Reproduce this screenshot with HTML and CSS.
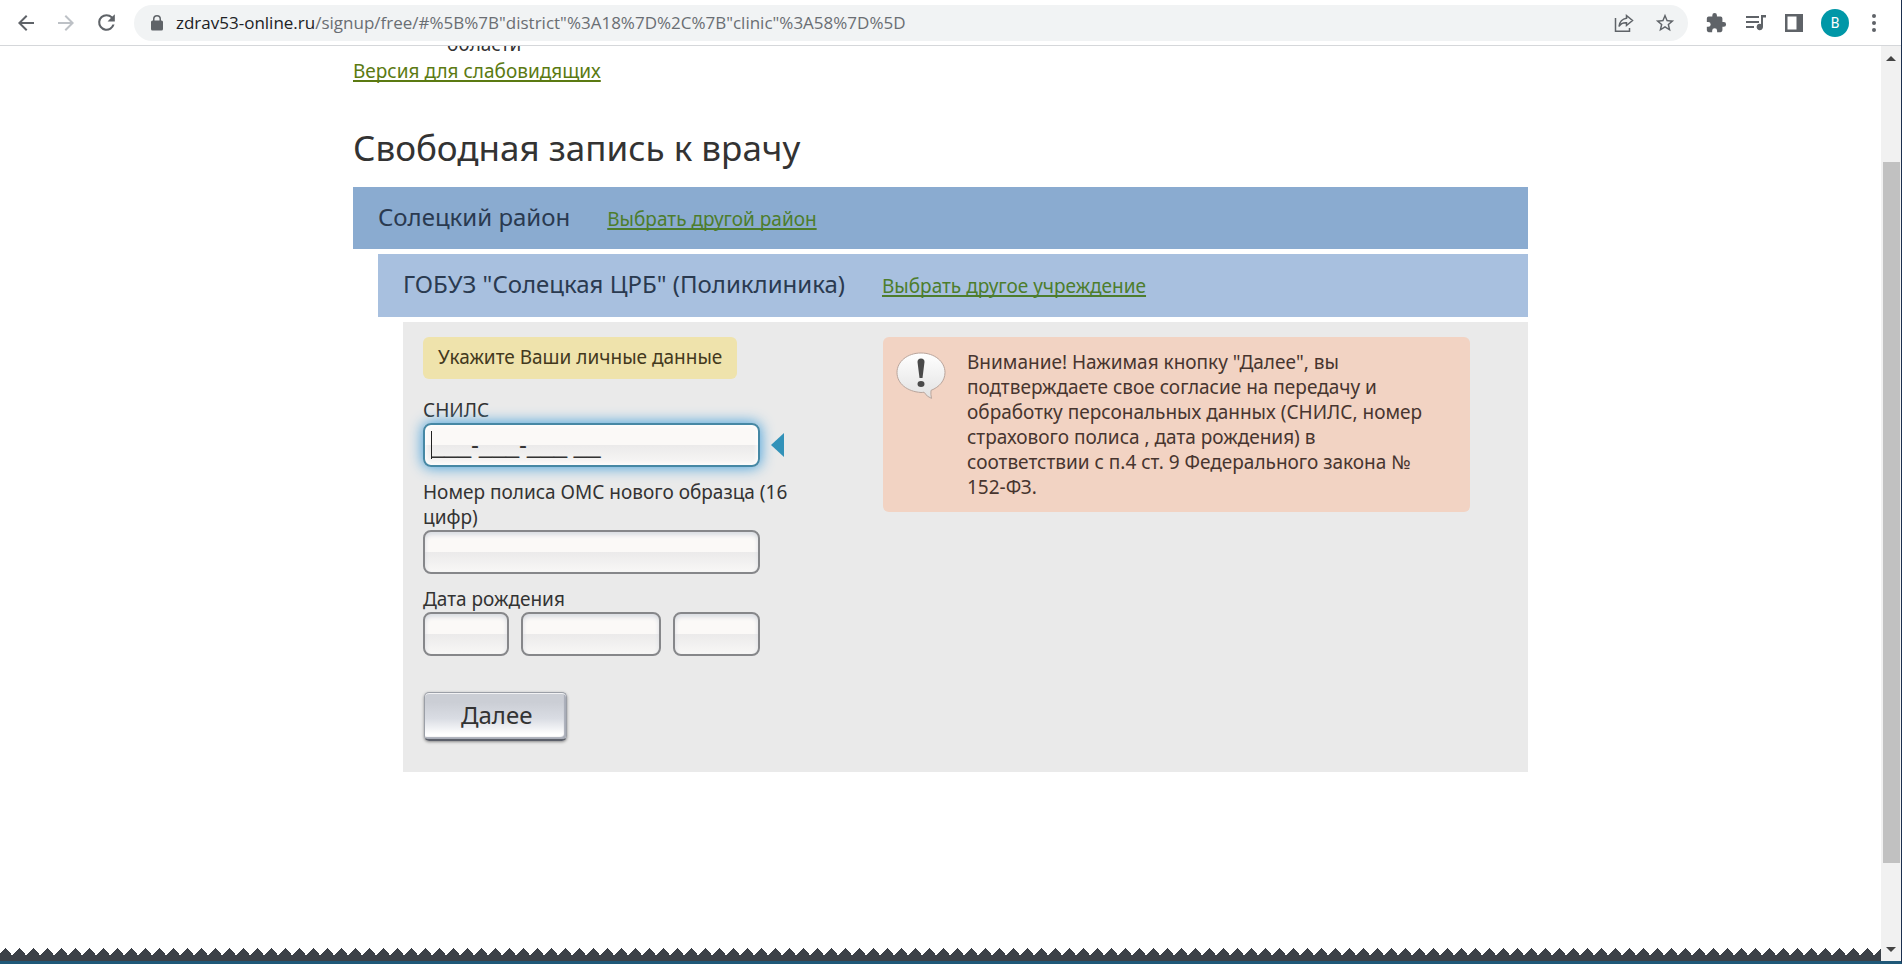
FILE: index.html
```html
<!DOCTYPE html>
<html lang="ru">
<head>
<meta charset="utf-8">
<title>Свободная запись к врачу</title>
<link rel="stylesheet" href="styles.css">
</head>
<body>
<header class="toolbar">
  <button class="tool back" aria-label="Назад"><svg width="24" height="24" viewBox="0 0 24 24"><path d="M20 11H7.83l5.59-5.59L12 4l-8 8 8 8 1.41-1.41L7.83 13H20v-2z"/></svg></button>
  <button class="tool forward" aria-label="Вперёд" disabled><svg width="24" height="24" viewBox="0 0 24 24"><path d="M4 13h12.17l-5.59 5.59L12 20l8-8-8-8-1.41 1.41L16.17 11H4v2z"/></svg></button>
  <button class="tool reload" aria-label="Обновить"><svg width="25" height="25" viewBox="0 0 24 24"><path d="M17.65 6.35A7.96 7.96 0 0 0 12 4a8 8 0 1 0 7.73 10h-2.08A6 6 0 1 1 12 6c1.66 0 3.14.69 4.22 1.78L13 11h7V4l-2.35 2.35z"/></svg></button>
  <div class="address">
    <svg class="lock" width="12" height="16" viewBox="0 0 12 16"><path d="M10.500 5.500H10V4a4 4 0 0 0-8 0v1.500h-.5A1.500 1.500 0 0 0 0 7v7a1.500 1.500 0 0 0 1.500 1.500h9A1.500 1.500 0 0 0 12 14V7a1.500 1.500 0 0 0-1.500-1.500zM3.500 4a2.500 2.500 0 0 1 5 0v1.500h-5z"/></svg>
    <span class="url"><span class="host">zdrav53-online.ru</span>/signup/free/#%5B%7B"district"%3A18%7D%2C%7B"clinic"%3A58%7D%5D</span>
    <button class="tool" aria-label="Поделиться"><svg width="20" height="20" viewBox="0 0 20 20" fill="none"><path class="line" d="M1.500 5v13.200h14V15M12.500 2.500l6 5-6 5V9.800C9 9.600 6.500 10.800 5 13.500 5.500 9 8.500 5.600 12.500 5.200z"/></svg></button>
    <button class="tool" aria-label="Добавить в закладки"><svg width="22" height="22" viewBox="0 0 24 24"><path d="M22 9.240l-7.190-.62L12 2 9.190 8.630 2 9.240l5.460 4.730L5.820 21 12 17.270 18.180 21l-1.630-7.030L22 9.240zM12 15.400l-3.760 2.270 1-4.280-3.320-2.880 4.380-.38L12 6.100l1.710 4.040 4.380.38-3.320 2.880 1 4.280L12 15.400z"/></svg></button>
  </div>
  <div class="actions">
    <button class="tool" aria-label="Расширения"><svg width="22" height="22" viewBox="0 0 24 24"><path d="M20.500 11H19V7a2 2 0 0 0-2-2h-4V3.500a2.500 2.500 0 0 0-5 0V5H4a2 2 0 0 0-2 2v3.800h1.500a2.700 2.700 0 0 1 0 5.400H2V20a2 2 0 0 0 2 2h3.800v-1.500a2.700 2.700 0 0 1 5.400 0V22H17a2 2 0 0 0 2-2v-4h1.500a2.500 2.500 0 0 0 0-5z"/></svg></button>
    <button class="tool" aria-label="Управление медиа"><svg width="22" height="20" viewBox="0 0 22 20"><path d="M1 3h13v2H1zM1 8h13v2H1zM1 13h8v2H1zM16 2h5v2.500h-3V14a3.200 3.200 0 1 1-2-3z"/></svg></button>
    <button class="tool" aria-label="Боковая панель"><svg width="18" height="18" viewBox="0 0 18 18"><path fill-rule="evenodd" d="M0 0h18v18H0zM2.500 2.500v13h9v-13z"/></svg></button>
    <button class="avatar" aria-label="Профиль">B</button>
    <button class="tool menu" aria-label="Меню"><svg width="6" height="18" viewBox="0 0 6 18"><circle cx="3" cy="2" r="2"/><circle cx="3" cy="9" r="2"/><circle cx="3" cy="16" r="2"/></svg></button>
  </div>
</header>

<div class="viewport">
  <div class="page">
    <main class="content">
      <p class="region">области</p>
      <a class="link" href="#">Версия для слабовидящих</a>
      <h1 class="title">Свободная запись к врачу</h1>
      <section class="step district">
        <h2 class="step-name">Солецкий район</h2>
        <a class="link" href="#">Выбрать другой район</a>
      </section>
      <section class="step clinic">
        <h2 class="step-name">ГОБУЗ "Солецкая ЦРБ" (Поликлиника)</h2>
        <a class="link" href="#">Выбрать другое учреждение</a>
      </section>
      <section class="panel">
        <form class="form">
          <p class="hint">Укажите Ваши личные данные</p>
          <div class="field">
            <label for="snils">СНИЛС</label>
            <div class="control active"><input class="box focused" id="snils" type="text" value="___-___-___ __"></div>
          </div>
          <div class="field">
            <label for="policy">Номер полиса ОМС нового образца (16 цифр)</label>
            <div class="control"><input class="box" id="policy" type="text"></div>
          </div>
          <div class="field">
            <label for="day">Дата рождения</label>
            <div class="control date">
              <input class="box" id="day" type="text">
              <input class="box" type="text" aria-label="Месяц">
              <input class="box" type="text" aria-label="Год">
            </div>
          </div>
          <button class="next" type="button">Далее</button>
        </form>
        <aside class="notice">
          <svg class="bubble" width="50" height="48" viewBox="0 0 50 48">
            <defs><linearGradient id="shine" x1="0" y1="0" x2="0" y2="1"><stop offset="0" stop-color="#fff"/><stop offset="1" stop-color="#e2e2e2"/></linearGradient></defs>
            <path d="M25 1C11.500 1 1 9.500 1 20.500S11 39.500 25 40.500q2 0 3-.3 3 4.800 7.500 6.200-1-4-.5-8C43.500 35 49 28.500 49 20.500 49 9.500 38.500 1 25 1z" fill="url(#shine)" stroke="#b9a59c"/>
            <path d="M21.500 10q0-3.500 3.500-3.500t3.500 3.500l-2 16h-3z" fill="#4a4a4a"/><ellipse cx="25" cy="32" rx="3.500" ry="3" fill="#4a4a4a"/>
          </svg>
          <p class="notice-text">Внимание! Нажимая кнопку "Далее", вы подтверждаете свое согласие на передачу и обработку персональных данных (СНИЛС, номер страхового полиса , дата рождения) в соответствии с п.4 ст. 9 Федерального закона № 152-ФЗ.</p>
        </aside>
      </section>
    </main>
    <div class="zigzag"></div>
  </div>
  <div class="scrollbar">
    <svg width="10" height="6" viewBox="0 0 10 6"><path d="M0 6l5-5 5 5z"/></svg>
    <div class="track"><div class="thumb"></div></div>
    <svg width="10" height="6" viewBox="0 0 10 6"><path d="M0 0l5 5 5-5z"/></svg>
  </div>
</div>
</body>
</html>
```
FILE: styles.css
```css
* { box-sizing: border-box; }

body {
  margin: 0;
  height: 100vh;
  display: flex;
  flex-direction: column;
  overflow: hidden;
  border-right: 1px solid #1b2f4e;
  border-bottom: 3px solid #1f5878;
  background: #fff;
  color: #333;
  font: 19px/25px "Noto Sans", "Open Sans", sans-serif;
}

h1, h2, p { margin: 0; font-weight: normal; }
button { border: 0; padding: 0; background: none; color: inherit; font: inherit; }
svg { display: block; }

/* Browser toolbar */
.toolbar {
  flex: none;
  height: 46px;
  display: flex;
  align-items: center;
  padding: 0 24px 0 14px;
  border-bottom: 1px solid #d5d7da;
}
.tool { flex: none; fill: #5f6368; }
.forward { margin-left: 16px; fill: #bdc1c6; }
.reload { margin-left: 16px; }
.line { stroke: #5f6368; stroke-width: 1.5; }
.address {
  flex: 1;
  display: flex;
  align-items: center;
  gap: 20px;
  height: 36px;
  margin-left: 15px;
  padding: 0 12px 0 17px;
  border-radius: 18px;
  background: #f1f3f4;
}
.lock { flex: none; fill: #5f6368; }
.url {
  flex: 1;
  margin-left: -7px;
  color: #6a6e73;
  font: 17px/24px "Open Sans", "Noto Sans", sans-serif;
  white-space: nowrap;
}
.host { color: #202124; }
.actions { display: flex; align-items: center; gap: 18px; margin-left: 17px; }
.menu { margin-left: 4px; }
.avatar {
  width: 28px;
  height: 28px;
  border-radius: 50%;
  background: #0097a7;
  color: #fff;
  font: 14px/28px Roboto, sans-serif;
}

/* Scrolled page */
.viewport { flex: 1; min-height: 0; display: flex; }
.page {
  flex: 1;
  min-width: 0;
  display: flex;
  flex-direction: column;
  justify-content: space-between;
  overflow: hidden;
}
.content { width: 100%; max-width: 1175px; margin: 0 auto; }
.region { margin: -14px 0 2px; padding-left: 94px; }
.link { color: #5b7a12; text-decoration-thickness: 2px; text-underline-offset: 2px; text-decoration-skip-ink: none; }
.title { margin: 39px 0 14px; font-size: 35px; line-height: 50px; }

.step {
  display: flex;
  align-items: baseline;
  gap: 37px;
  margin-bottom: 5px;
  padding: 14px 25px 16px;
}
.step .link { color: #4d7d2c; }
.district { background: #8aabd0; }
.clinic { margin-left: 25px; padding-bottom: 17px; background: #a8c0df; }
.step-name { color: #2a3a50; font-size: 24px; line-height: 32px; }

.panel {
  display: flex;
  align-items: flex-start;
  gap: 87px;
  margin-left: 50px;
  padding: 15px 58px 31px 20px;
  background: #eaeaea;
}
.form { flex: none; width: 373px; }
.hint {
  width: fit-content;
  margin-bottom: 19px;
  padding: 8px 15px 9px;
  border-radius: 6px;
  background: #efe3ac;
  color: #43391d;
}
.field { margin-bottom: 13px; }
.field label { display: block; }
.control { position: relative; display: flex; width: 337px; }
.box {
  width: 100%;
  min-width: 0;
  height: 44px;
  padding: 0 6px;
  border: 2px solid #86878a;
  border-radius: 8px;
  outline: 0;
  background: linear-gradient(#fbf9f7 50%, #ebeaea 50%, #f8f7f6);
  box-shadow: inset 0 3px 4px #d9dce2;
  color: #333;
  font: 24px/28px "Liberation Sans", Arial, sans-serif;
}
.focused {
  border-color: #4688a5;
  box-shadow: 0 0 14px 1px #4aa3dc, inset 0 0 4px 1px #fff;
}
.active::before {
  content: "";
  position: absolute;
  left: 8px;
  top: 8px;
  width: 1px;
  height: 28px;
  background: #222;
}
.active::after {
  content: "";
  position: absolute;
  left: 348px;
  top: 10px;
  border: solid transparent;
  border-width: 12px 13px 12px 0;
  border-right-color: #3292b9;
}
.date { display: grid; grid-template-columns: 86px 1fr 87px; gap: 12px; }
.next {
  height: 49px;
  margin: 23px 0 0 1px;
  padding: 0 34px 4px 36px;
  border: 1px solid #9b9fa7;
  border-bottom: 2px solid #5c606a;
  border-radius: 5px;
  background: linear-gradient(#cbced5 20%, #d9dce3 55%, #fff 90%);
  box-shadow: inset 0 1px #f2f2f4, inset -2px -2px 1px #a9adb8, 0 1px 3px #888;
  font-size: 24px;
}
.notice {
  flex: 1;
  display: flex;
  gap: 21px;
  padding: 13px 28px 12px 13px;
  border-radius: 6px;
  background: #f2d3c3;
  color: #47352f;
}
.bubble { flex: none; margin-top: 2px; }
.zigzag {
  flex: none;
  height: 13px;
  background: conic-gradient(from 135deg at 50% 0, #3c4148 90deg, transparent 0) -2px 0 / 14px 7px repeat-x,
    linear-gradient(#3c4148, #3c4148) 0 7px / 100% 6px no-repeat;
}

.scrollbar {
  flex: none;
  width: 20px;
  display: flex;
  flex-direction: column;
  align-items: center;
  padding: 9px 0 8px;
  background: #f1f1f1;
  fill: #444;
}
.track { flex: 1; width: 17px; padding: 101px 0 84px; }
.thumb { height: 100%; background: #c1c1c1; }
```
